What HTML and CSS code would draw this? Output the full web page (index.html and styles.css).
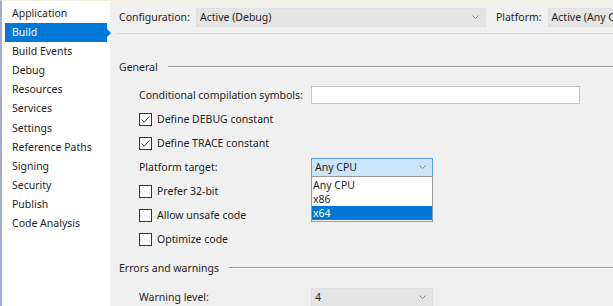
FILE: index.html
```html
<!DOCTYPE html>
<html>
<head>
    <title>Project Properties - Build</title>
    <link rel="stylesheet" href="styles.css">
</head>
<body>
    <div class="window">
        <ul class="nav">
            <li>Application</li>
            <li class="active">Build</li>
            <li>Build Events</li>
            <li>Debug</li>
            <li>Resources</li>
            <li>Services</li>
            <li>Settings</li>
            <li>Reference Paths</li>
            <li>Signing</li>
            <li>Security</li>
            <li>Publish</li>
            <li>Code Analysis</li>
        </ul>

        <div class="page">
            <div class="toolbar">
                <span class="toolbar-label">Configuration:</span>
                <div class="combo combo-config">
                    <span>Active (Debug)</span>
                    <svg class="chevron" width="7" height="4" viewBox="0 0 7 4"><path d="M0.5 0.5 L3.5 3.5 L6.5 0.5" fill="none" stroke="#8a8a8a" stroke-width="1"/></svg>
                </div>
                <span class="toolbar-label">Platform:</span>
                <div class="combo combo-platform">
                    <span>Active (Any CPU)</span>
                </div>
            </div>

            <div class="section-title"><span>General</span><div class="rule"></div></div>

            <div class="row">
                <label class="field-label">Conditional compilation symbols:</label>
                <div class="textbox"></div>
            </div>
            <div class="row">
                <span class="check checked"><svg width="13" height="13" viewBox="0 0 13 13"><path d="M2.5 6.5 L5.2 9.2 L10.5 3.5" fill="none" stroke="#333" stroke-width="1"/></svg></span>
                <span>Define DEBUG constant</span>
            </div>
            <div class="row">
                <span class="check checked"><svg width="13" height="13" viewBox="0 0 13 13"><path d="M2.5 6.5 L5.2 9.2 L10.5 3.5" fill="none" stroke="#333" stroke-width="1"/></svg></span>
                <span>Define TRACE constant</span>
            </div>
            <div class="row">
                <label class="field-label">Platform target:</label>
                <div class="combo combo-field open">
                    <span>Any CPU</span>
                    <svg class="chevron" width="7" height="4" viewBox="0 0 7 4"><path d="M0.5 0.5 L3.5 3.5 L6.5 0.5" fill="none" stroke="#8a8a8a" stroke-width="1"/></svg>
                    <ul class="dropdown">
                        <li>Any CPU</li>
                        <li>x86</li>
                        <li class="selected">x64</li>
                    </ul>
                </div>
            </div>
            <div class="row">
                <span class="check"></span>
                <span>Prefer 32-bit</span>
            </div>
            <div class="row">
                <span class="check"></span>
                <span>Allow unsafe code</span>
            </div>
            <div class="row">
                <span class="check"></span>
                <span>Optimize code</span>
            </div>

            <div class="section-title"><span>Errors and warnings</span><div class="rule"></div></div>

            <div class="row">
                <label class="field-label">Warning level:</label>
                <div class="combo combo-field">
                    <span>4</span>
                    <svg class="chevron" width="7" height="4" viewBox="0 0 7 4"><path d="M0.5 0.5 L3.5 3.5 L6.5 0.5" fill="none" stroke="#8a8a8a" stroke-width="1"/></svg>
                </div>
            </div>
        </div>
    </div>
</body>
</html>
```

FILE: styles.css
```css
body {
    margin: 0;
    font-family: "Noto Sans", "Open Sans", sans-serif;
    font-size: 10.5px;
    color: #1e1e1e;
    overflow: hidden;
}

.window {
    display: flex;
    height: 306px;
    border-left: 2px solid #a3acc9;
    border-top: 1px solid #f3f0e2;
    box-sizing: border-box;
    overflow: hidden;
}

/* left navigation */
.nav {
    list-style: none;
    margin: 0;
    padding: 3px 0 0 3px;
    width: 105px;
    flex-shrink: 0;
    background-color: #fff;
}

.nav li {
    position: relative;
    height: 19.1px;
    line-height: 19px;
    padding-left: 7px;
    margin-right: 3px;
    white-space: nowrap;
}

.nav li.active {
    background-color: #0078d7;
    color: #fff;
}

.nav li.active:after {
    content: "";
    position: absolute;
    right: -4px;
    top: 6px;
    border-left: 4px solid #0078d7;
    border-top: 4px solid transparent;
    border-bottom: 4px solid transparent;
}

/* right page */
.page {
    flex: 1;
    min-width: 0;
    background-color: #f0f0f0;
    padding-left: 9px;
    overflow: hidden;
}

.toolbar {
    display: flex;
    align-items: center;
    height: 32px;
    margin-left: -2px;
    padding-left: 2px;
    border-bottom: 1px solid #d9d9d9;
    white-space: nowrap;
}

.toolbar-label {
    margin-right: 6px;
    flex-shrink: 0;
}

.combo {
    position: relative;
    display: flex;
    align-items: center;
    height: 19px;
    padding: 0 3px;
    box-sizing: border-box;
    background-color: #e5e5e5;
    border: 1px solid #e0e0e0;
}

.combo .chevron {
    margin-left: auto;
    margin-right: 3px;
}

.combo-config {
    width: 290px;
    flex-shrink: 0;
    margin-right: 10px;
}

.combo-platform {
    width: 80px;
    flex-shrink: 0;
    overflow: hidden;
}

.section-title {
    display: flex;
    align-items: center;
    height: 16px;
    margin-top: 25px;
    margin-bottom: 8px;
}

.section-title .rule {
    flex: 1;
    height: 1px;
    margin-left: 10px;
    background-color: #a0a0a0;
    border-bottom: 1px solid #fbfbfb;
}

.row + .section-title {
    margin-top: 9px;
    margin-bottom: 9px;
}

.row {
    display: flex;
    align-items: center;
    height: 24px;
    padding-left: 20px;
}

.field-label {
    width: 172px;
    flex-shrink: 0;
}

.textbox {
    width: 269px;
    height: 18px;
    box-sizing: border-box;
    background-color: #fff;
    border: 1px solid #c4c4c4;
}

.check {
    width: 13px;
    height: 13px;
    box-sizing: border-box;
    border: 1px solid #333;
    background-color: #fff;
    margin-right: 5px;
    display: flex;
    align-items: center;
    justify-content: center;
}

.check svg {
    flex-shrink: 0;
}

.combo-field {
    width: 122px;
}

.combo-field.open {
    background-color: #cce4f7;
    border-color: #569de5;
}

.dropdown {
    position: absolute;
    left: -1px;
    top: 17px;
    width: 122px;
    margin: 0;
    padding: 1px 0;
    list-style: none;
    background-color: #fff;
    border: 1px solid #999;
    box-sizing: border-box;
    z-index: 2;
}

.dropdown li {
    height: 14px;
    line-height: 14px;
    padding-left: 1px;
}

.dropdown li.selected {
    background-color: #0078d7;
    color: #fff;
}
```
